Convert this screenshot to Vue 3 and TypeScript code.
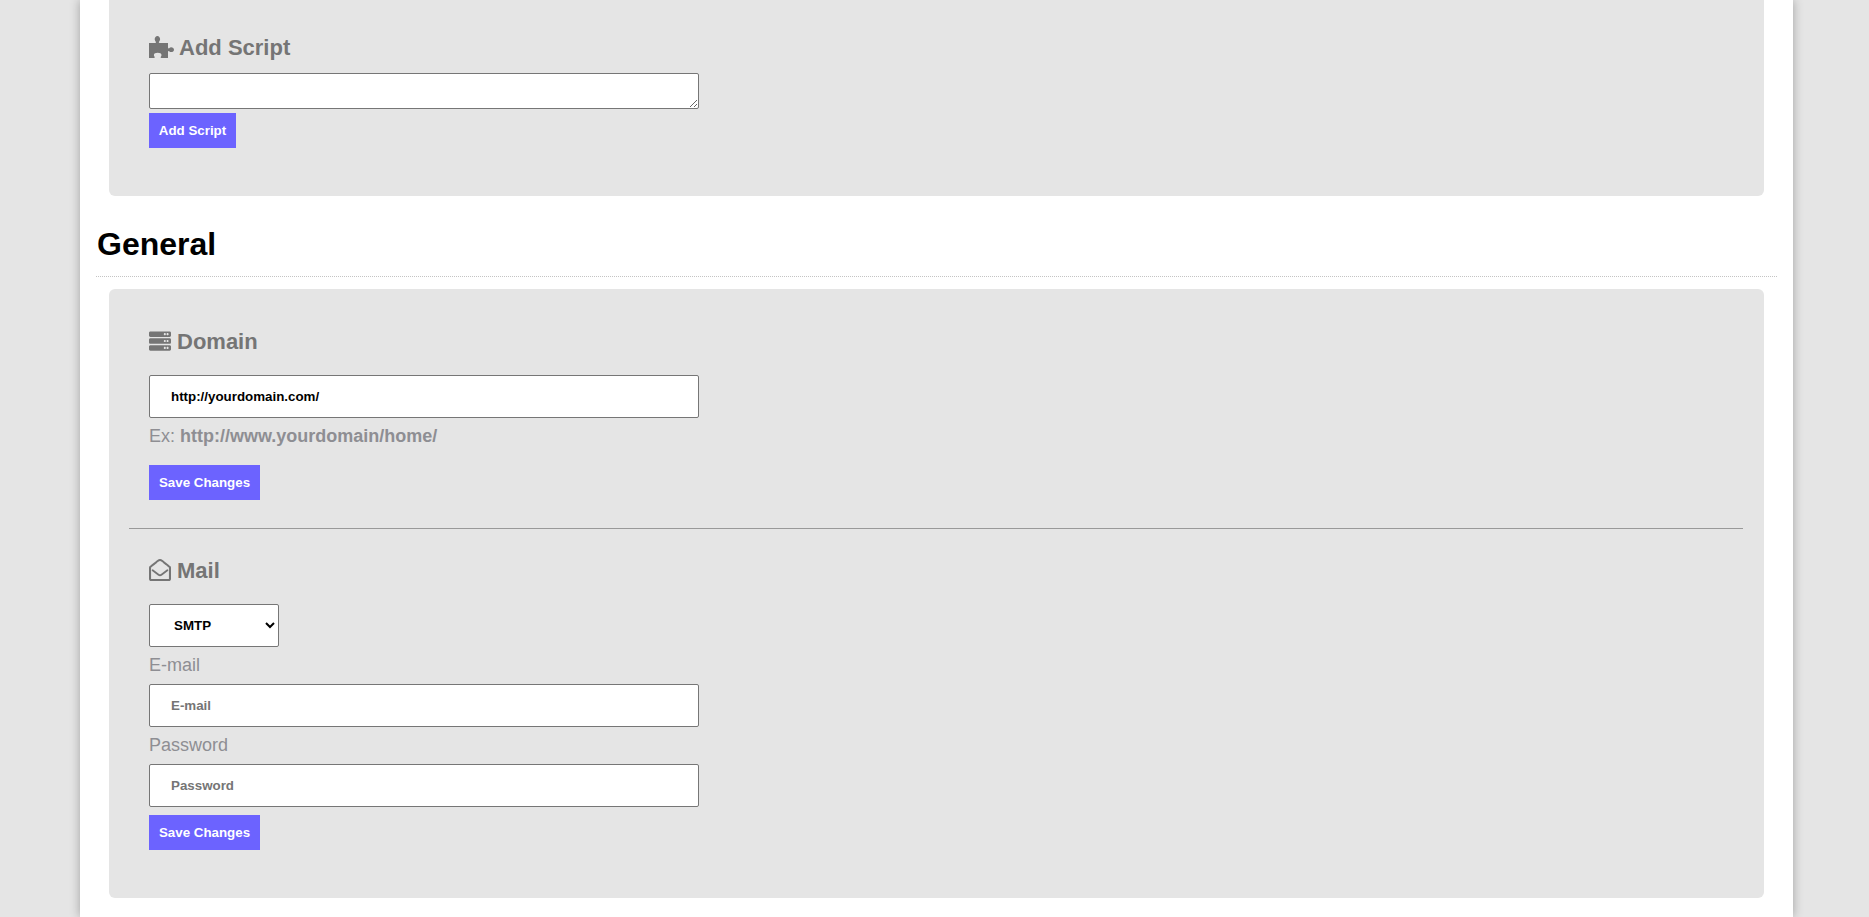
<script setup lang="ts">
const emailLabel: string = 'E-mail'
const passwordLabel: string = 'Password'
</script>

<template>
  <div class="page">
    <main class="sheet">
      <section class="panel first">
        <h3 class="heading script-heading">
          <svg class="icon puzzle" viewBox="0 0 25 22" aria-hidden="true">
            <path fill="currentColor" d="M0 7H6.200C7 7 7.200 6.300 6.800 5.800 6.200 5.100 5.700 4.300 5.700 3.100 5.700 1.400 6.900 0 8.400 0S11.100 1.400 11.100 3.100C11.100 4.300 10.600 5.100 10 5.800 9.600 6.300 9.800 7 10.600 7H19V11.600C19 12.400 19.700 12.600 20.200 12.200 20.800 11.700 21.300 11.300 22.100 11.300 23.700 11.300 25 12.300 25 13.700S23.700 16.100 22.100 16.100C21.300 16.100 20.800 15.700 20.200 15.200 19.700 14.800 19 15 19 15.800V22H12.400C11.600 22 11.400 21.300 11.800 20.800 12.300 20.200 12.500 19.700 12.500 19 12.500 17.700 10.900 16.800 8.700 16.800S4.900 17.700 4.900 19C4.900 19.700 5.100 20.200 5.600 20.800 6 21.300 5.800 22 5 22H0Z" />
          </svg>
          Add Script
        </h3>
        <textarea class="field script-field"></textarea>
        <button class="action script-action" type="button">Add Script</button>
      </section>

      <h2 class="section-title">General</h2>
      <div class="dotted-rule"></div>

      <section class="panel general">
        <div class="block domain">
          <h3 class="heading">
            <svg class="icon server" viewBox="0 0 512 512" aria-hidden="true">
              <path fill="currentColor" d="M480 160H32c-17.673 0-32-14.327-32-32V64c0-17.673 14.327-32 32-32h448c17.673 0 32 14.327 32 32v64c0 17.673-14.327 32-32 32zm-48-88c-13.255 0-24 10.745-24 24s10.745 24 24 24 24-10.745 24-24-10.745-24-24-24zm-64 0c-13.255 0-24 10.745-24 24s10.745 24 24 24 24-10.745 24-24-10.745-24-24-24zm112 248H32c-17.673 0-32-14.327-32-32v-64c0-17.673 14.327-32 32-32h448c17.673 0 32 14.327 32 32v64c0 17.673-14.327 32-32 32zm-48-88c-13.255 0-24 10.745-24 24s10.745 24 24 24 24-10.745 24-24-10.745-24-24-24zm-64 0c-13.255 0-24 10.745-24 24s10.745 24 24 24 24-10.745 24-24-10.745-24-24-24zm112 248H32c-17.673 0-32-14.327-32-32v-64c0-17.673 14.327-32 32-32h448c17.673 0 32 14.327 32 32v64c0 17.673-14.327 32-32 32zm-48-88c-13.255 0-24 10.745-24 24s10.745 24 24 24 24-10.745 24-24-10.745-24-24-24zm-64 0c-13.255 0-24 10.745-24 24s10.745 24 24 24 24-10.745 24-24-10.745-24-24-24z" />
            </svg>
            Domain
          </h3>
          <input class="field text-field" type="text" value="http://yourdomain.com/" />
          <p class="hint">Ex: <strong>http://www.yourdomain/home/</strong></p>
          <button class="action domain-action" type="button">Save Changes</button>
        </div>

        <hr class="rule" />

        <div class="block mail">
          <h3 class="heading">
            <svg class="icon envelope" viewBox="0 0 512 512" aria-hidden="true">
              <path fill="currentColor" d="M494.586 164.516c-4.697-3.883-111.723-89.95-135.251-108.657C337.231 38.191 299.437 0 256 0c-43.205 0-80.636 37.717-103.335 55.859-24.463 19.45-131.07 105.195-135.15 108.549A48.004 48.004 0 0 0 0 201.485V464c0 26.51 21.49 48 48 48h416c26.51 0 48-21.49 48-48V201.509a48 48 0 0 0-17.414-36.993zM464 458a6 6 0 0 1-6 6H54a6 6 0 0 1-6-6V203.347c0-1.813.816-3.526 2.226-4.665 15.87-12.814 108.793-87.554 132.364-106.293C200.755 78.026 232.71 48 256 48c23.394 0 55.82 30.519 73.41 44.389 23.072 18.341 116.42 93.408 132.365 106.293a5.99 5.99 0 0 1 2.225 4.665V458z" />
              <path fill="none" stroke="currentColor" stroke-width="42" stroke-linecap="round" stroke-linejoin="round" d="M84 262 222 366c20 15 48 15 68 0L428 262" />
            </svg>
            Mail
          </h3>
          <select class="field mail-select">
            <option>SMTP</option>
          </select>
          <label class="caption">{{ emailLabel }}</label>
          <input class="field text-field" type="text" :placeholder="emailLabel" />
          <label class="caption">{{ passwordLabel }}</label>
          <input class="field text-field" type="password" :placeholder="passwordLabel" />
          <button class="action mail-action" type="button">Save Changes</button>
        </div>
      </section>
    </main>
  </div>
</template>

<style>
html,
body {
  margin: 0;
  height: 917px;
  overflow: hidden;
  background: #e5e5e5;
}
</style>

<style scoped>
.page {
  height: 917px;
  overflow: hidden;
  padding: 0 76px 0 80px;
  background: #e5e5e5;
  font-family: "Liberation Sans", Arial, sans-serif;
}

.sheet {
  height: 917px;
  padding: 0 16px;
  background: #fff;
  box-shadow: 0 0 10px rgba(0, 0, 0, 0.3);
}

.panel {
  margin: 0 13px;
  padding: 0 40px;
  background: #e5e5e5;
  border-radius: 0 0 6px 6px;
}

.first {
  height: 196px;
  padding-top: 36px;
  box-sizing: border-box;
}

.general {
  height: 609px;
  box-sizing: border-box;
  padding: 41px 21px 0 20px;
  border-radius: 6px;
}

.block {
  padding: 0 20px;
}

.heading {
  display: flex;
  align-items: center;
  gap: 5px;
  margin: 0;
  height: 24px;
  font-size: 22px;
  line-height: 24px;
  font-weight: 700;
  color: #757575;
}

.icon {
  flex: none;
  display: block;
  margin-top: -2px;
}

.puzzle {
  width: 25px;
  height: 22px;
}

.server {
  width: 22px;
  height: 22px;
  margin-right: 1px;
}

.envelope {
  width: 22px;
  height: 22px;
  margin-right: 1px;
}

.script-heading {
  margin-bottom: 13px;
}

.field {
  display: block;
  box-sizing: border-box;
  background: #fff;
  border: 1px solid #767676;
  border-radius: 2px;
  color: #000;
  font-family: inherit;
  font-size: 13.333px;
  font-weight: 700;
}

.script-field {
  width: 550px;
  height: 36px;
  margin: 0;
  padding: 2px;
  resize: vertical;
}

.text-field {
  width: 550px;
  height: 43px;
  margin: 0;
  padding: 0 21px;
  outline: none;
}

.text-field::placeholder {
  color: #757575;
  opacity: 1;
}

.action {
  display: block;
  border: 0;
  margin: 0;
  height: 35px;
  background: #6c63ff;
  color: #fff;
  font-family: inherit;
  font-size: 13.333px;
  font-weight: 700;
  text-align: center;
  cursor: pointer;
}

.script-action {
  width: 87px;
  margin-top: 4px;
  padding: 0;
}

.section-title {
  margin: 0;
  padding: 30px 0 13px 1px;
  font-size: 32px;
  line-height: 37px;
  font-weight: 700;
  color: #000;
}

.dotted-rule {
  border-top: 1px dotted #c4c4c4;
  margin-bottom: 12px;
}

.domain .heading {
  margin-bottom: 21px;
}

.hint {
  margin: 8px 0 0;
  height: 21px;
  font-size: 18px;
  line-height: 21px;
  color: #8e8e93;
}

.hint strong {
  font-weight: 700;
}

.domain-action,
.mail-action {
  width: 111px;
  padding: 0;
}

.domain-action {
  margin-top: 18px;
}

.rule {
  border: 0;
  border-top: 1px solid #999;
  margin: 28px 0 0;
}

.mail {
  padding-top: 30px;
}

.mail .heading {
  margin-bottom: 21px;
}

.mail-select {
  width: 130px;
  height: 43px;
  padding: 0 20px;
  margin: 0;
}

.caption {
  display: block;
  height: 21px;
  margin: 8px 0;
  font-size: 18px;
  line-height: 21px;
  font-weight: 400;
  color: #8e8e93;
}

.mail-action {
  margin-top: 8px;
}
</style>
